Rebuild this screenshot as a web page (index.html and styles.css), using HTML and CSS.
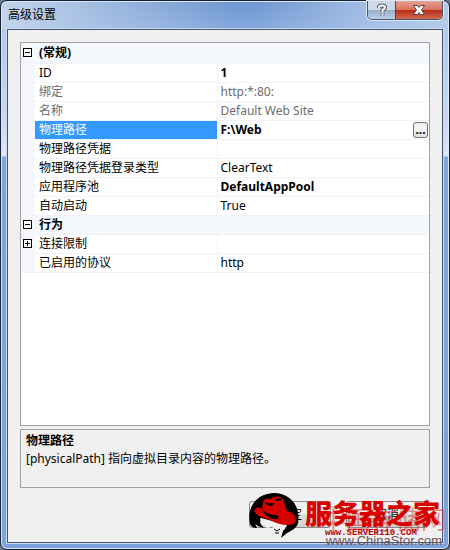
FILE: index.html
```
<!DOCTYPE html>
<html lang="zh-CN">
<head>
<meta charset="UTF-8" />
<meta name="viewport" content="width=device-width, initial-scale=1" />
<title>高级设置</title>
<link rel="stylesheet" href="styles.css">
</head>
<body>

<div class="window">
  <div class="titlebar">
    <span class="title">高级设置</span>
    <div class="caption">
      <button class="help" aria-label="帮助">
        <svg width="12" height="14" viewBox="0 0 12 14"><path d="M3 5V4Q3 2.500 6 2.500T9 4.500Q9 6 6.500 7V9M6.500 10.500V12.500" fill="none" stroke="#4c5468" stroke-width="4"/><path d="M3 5V4Q3 2.500 6 2.500T9 4.500Q9 6 6.500 7V9M6.500 10.500V12.500" fill="none" stroke="#fff" stroke-width="2"/></svg>
      </button>
      <button class="close" aria-label="关闭">
        <svg width="14" height="12" viewBox="0 0 14 12"><path d="M1.500 1.500H5.500L7 3.500L8.500 1.500H12.500L9.500 6L12.500 10.500H8.500L7 8.500L5.500 10.500H1.500L4.500 6Z" fill="#fff" stroke="#57454f"/></svg>
      </button>
    </div>
  </div>

  <div class="client">
    <div class="grid">
      <table>
        <colgroup><col class="c-mark"><col class="c-name"><col></colgroup>
        <tbody>
          <tr class="category"><td><button class="toggle" aria-label="折叠"></button></td><th colspan="2">(常规)</th></tr>
          <tr><td></td><td>ID</td><td class="changed">1</td></tr>
          <tr class="readonly"><td></td><td>绑定</td><td>http:*:80:</td></tr>
          <tr class="readonly"><td></td><td>名称</td><td>Default Web Site</td></tr>
          <tr class="selected"><td></td><td>物理路径</td><td class="changed"><div class="edit">F:\Web<button class="browse">...</button></div></td></tr>
          <tr><td></td><td>物理路径凭据</td><td></td></tr>
          <tr><td></td><td>物理路径凭据登录类型</td><td>ClearText</td></tr>
          <tr><td></td><td>应用程序池</td><td class="changed">DefaultAppPool</td></tr>
          <tr><td></td><td>自动启动</td><td>True</td></tr>
          <tr class="category"><td><button class="toggle" aria-label="折叠"></button></td><th colspan="2">行为</th></tr>
          <tr><td><button class="toggle plus" aria-label="展开"></button></td><td>连接限制</td><td></td></tr>
          <tr><td></td><td>已启用的协议</td><td>http</td></tr>
        </tbody>
      </table>
    </div>

    <div class="help-text">
      <strong>物理路径</strong>
      <p>[physicalPath] 指向虚拟目录内容的物理路径。</p>
    </div>

    <div class="actions">
      <button>确定</button>
      <button>取消</button>
    </div>
  </div>

  <!-- 水印 -->
  <div class="watermark">
    <svg class="logo" width="52" height="46" viewBox="0 0 52 46">
      <path d="M1 31C-3 12 10 0 25 0C41 0 52 13 49 30C48 35 42 38 38 40L32 45L34 38L37 32L12 25L11 30L15 35C10 34 8 32 6 31L8 35C4 35 2 33 1 31Z" fill="#000"/>
      <path d="M11 25L38 32L36 36L33 38L29 35L27 37L22 33L19 36L15 32L13 33Z" fill="#f0f0f0"/>
      <path d="M7 15C9 14 11 15 13 16L14 9C15 5 18 5 22 6C27 2 34 3 35 9L38 18C43 19 47 22 47 26C47 30 44 32 39 32C32 32 27 30 23 28L10 23C5 20 4 17 7 15Z" fill="#d20000"/>
      <path d="M13 16C17 20 21 22 27 22C30 23 30 25 28 26C22 27 15 22 13 16ZM16 9C19 11 22 10 25 10L23 13C20 13 17 12 16 9ZM26 6L32 5L33 7L28 8Z" fill="#000"/>
      <path d="M25 36L28 38L31 36M26 40H30" fill="none" stroke="#000"/>
    </svg>
    <div class="store">中国存储网</div>
    <div class="brand">服务器之家</div>
    <div class="brand-url">www.SERVER110.COM</div>
    <div class="store-url">www.ChinaStor.com</div>
  </div>
</div>

</body>
</html>
```
FILE: styles.css
```
* {
  box-sizing: border-box;
}
body {
  margin: 0;
  background: #68758a;
  font-family: "Noto Sans", "Noto Sans CJK SC", sans-serif;
  font-size: 12px;
  line-height: 18px;
  color: #000;
}
button {
  font: inherit;
  padding: 0;
}
.window {
  position: relative;
  display: flex;
  flex-direction: column;
  min-height: 100vh;
  padding: 0 6px 6px;
  border: 1px solid #162033;
  border-radius: 7px;
  background:
    linear-gradient(90deg, #c3d4ec 0, rgba(184, 204, 232, 0) 230px) 0 0 / 100% 29px no-repeat,
    linear-gradient(270deg, #b4cae9 0, #a9c2e7 70px, rgba(169, 194, 231, 0) 190px) 0 0 / 100% 29px no-repeat,
    linear-gradient(#6f97cf, #86a9dd) 0 0 / 100% 29px no-repeat,
    linear-gradient(#a9c4ec 0, #c9d8ef 120px, #dfe8f5 155px, #80a4dc 156px, #7da2da 100%);
  box-shadow: inset 0 0 0 1px #dbe8fa;
}
/* 标题栏 */
.titlebar {
  display: flex;
  justify-content: space-between;
  height: 28px;
}
.title {
  padding: 5px 1px;
}
.caption {
  display: flex;
  height: 19px;
  border: 1px solid #4d5669;
  border-top: 0;
  border-radius: 0 0 5px 5px;
  box-shadow: 0 0 0 1px #dce9fa;
  overflow: hidden;
}
.caption button {
  display: flex;
  align-items: center;
  justify-content: center;
  border: 0;
}
.help {
  width: 27px;
  background: linear-gradient(#ced8e7 50%, #98abc8 50%, #bdcfe8);
}
.caption .close {
  width: 47px;
  border-left: 1px solid #6b3540;
  background: linear-gradient(#e6a493, #d6705b 50%, #b72b16 50%, #d06c4e);
}
.client {
  flex: 1;
  display: flex;
  flex-direction: column;
  padding: 12px;
  border: 1px solid #46566c;
  box-shadow: 0 0 0 1px #c9dcf3;
  background: #f0f0f0;
}
/* 属性表格 */
.grid {
  flex: 1;
  border: 1px solid #a0a0a0;
  background: #fff;
}
table {
  width: 100%;
  table-layout: fixed;
  border-collapse: collapse;
}
.c-mark {
  width: 14px;
}
.c-name {
  width: 182px;
}
td, th {
  height: 19px;
  padding: 0 3px;
  border-bottom: 1px solid #f0f4fa;
  text-align: left;
  white-space: nowrap;
}
td:nth-child(2), th {
  padding-left: 4px;
}
td:first-child {
  padding: 0 2px;
  background: #f4f7fc;
}
td:nth-child(2) {
  border-right: 1px solid #f0f4fa;
}
tr:first-child th {
  height: 20px;
}
.category td, .category th {
  background: #f4f7fc;
}
.changed {
  font-weight: bold;
}
.readonly {
  color: #6d6d6d;
}
.selected td:nth-child(2) {
  background: #3399ff;
  color: #fff;
}
.toggle {
  display: block;
  width: 9px;
  height: 9px;
  border: 1px solid #000;
  background: linear-gradient(#000, #000) center / 5px 1px no-repeat #fff;
}
.toggle.plus {
  background:
    linear-gradient(#000, #000) center / 5px 1px no-repeat,
    linear-gradient(#000, #000) center / 1px 5px no-repeat #fff;
}
.edit {
  display: flex;
  justify-content: space-between;
  align-items: center;
  height: 18px;
  margin-right: -2px;
}
.browse {
  width: 15px;
  height: 16px;
  border: 1px solid #707070;
  border-radius: 3px;
  background: linear-gradient(#f3f3f3 50%, #dedede);
  line-height: 12px;
}
.help-text {
  height: 59px;
  margin-top: 3px;
  padding: 2px 5px;
  border: 1px solid #a0a0a0;
}
.help-text p {
  margin: 0;
}
.actions {
  display: flex;
  justify-content: flex-end;
  gap: 15px;
  padding: 13px 2px 2px;
}
.actions button {
  width: 82px;
  height: 27px;
  border: 1px solid #8a8a8a;
  border-radius: 3px;
  background: linear-gradient(#f2f2f2 50%, #dddddd 50%, #cfcfcf);
}
/* 水印 */
.watermark {
  position: absolute;
  right: 3px;
  bottom: 0;
  width: 197px;
  height: 56px;
  white-space: nowrap;
  pointer-events: none;
}
.watermark > * {
  position: absolute;
}
.logo {
  left: 0;
  top: 0;
}
.brand {
  left: 56px;
  top: 5px;
  font-size: 27px;
  font-weight: 900;
  line-height: 32px;
  color: #d90000;
}
.brand-url {
  left: 76px;
  top: 34px;
  font: bold 9px/12px "Liberation Mono", monospace;
  color: #b80000;
}
.store {
  right: 0;
  top: 10px;
  font-size: 25px;
  line-height: 32px;
  color: rgba(220, 40, 40, 0.5);
}
.store-url {
  right: 4px;
  bottom: 0;
  font: 13px/16px "Liberation Sans", sans-serif;
  color: #6e5560;
}
```
